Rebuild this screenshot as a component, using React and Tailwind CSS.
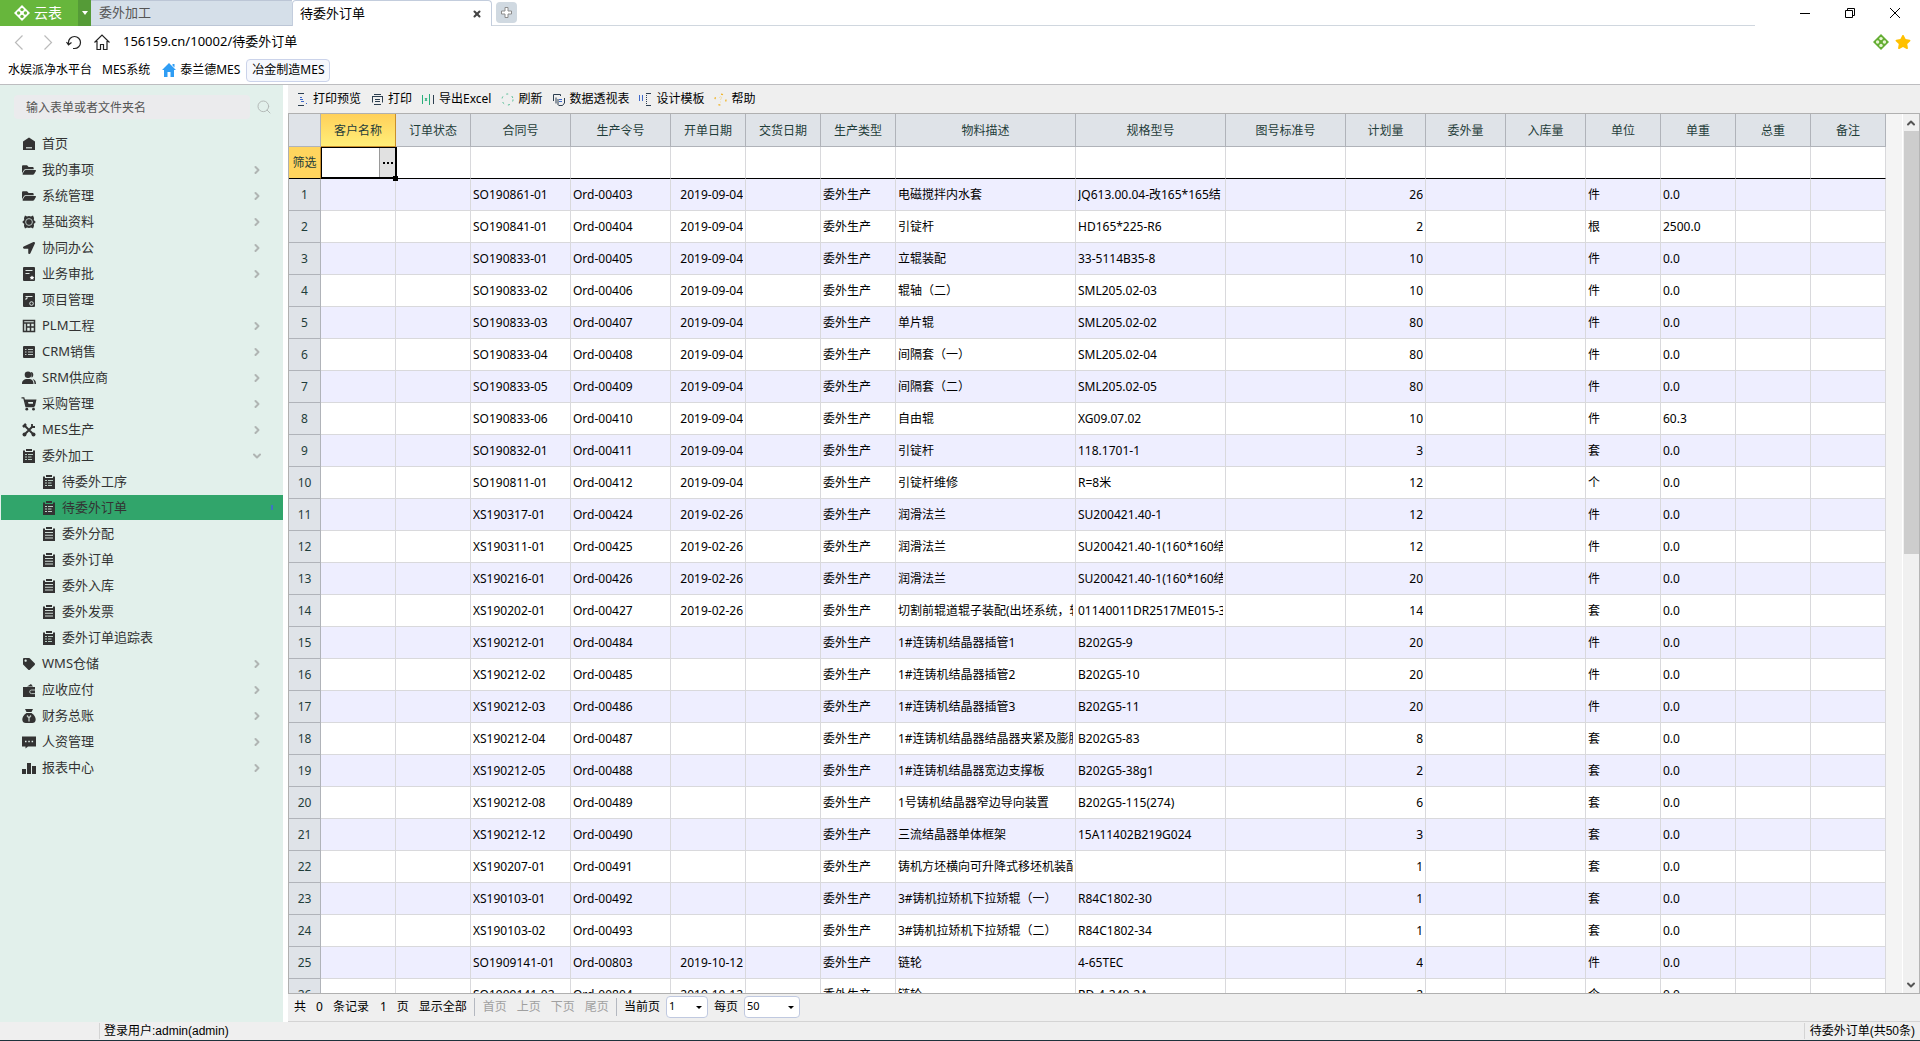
import React from 'react';
import { FaFolderOpen, FaLocationArrow, FaStar, FaTag } from 'react-icons/fa';
import { ChevronDown, ChevronRight, ChevronUp, Search, X } from 'lucide-react';

const ICONS = {
  home: (
    <>
      <path d="M7 0.5 13 4.5V13H1V4.5Z" fill="#333" />
      <rect x="4" y="10" width="6" height="1.5" fill="#b9c4c0" />
    </>
  ),
  gear: (
    <>
      <path d="M3 .5 5 1.5 7 1 9 1.5 11 .5 12 3 11.8 5 13.8 7 11.8 9 12 11 11 13.5 9 12.5 7 13 5 12.5 3 13.5 2 11 2.2 9 .2 7 2.2 5 2 3Z" fill="#333" />
      <circle cx="7" cy="7" r="3.4" fill="none" stroke="#b9c4c0" strokeWidth="1" />
    </>
  ),
  doc: (
    <>
      <rect x="1" y="0" width="12" height="14" rx="1" fill="#333" />
      <path d="M3.5 3.5h7M3.5 6.5h4" stroke="#dfe9e5" strokeWidth="1.2" />
      <path d="m10 8.5.8 1.3 1.5.3-1 1.1.1 1.5-1.4-.6-1.4.6.1-1.5-1-1.1 1.5-.3Z" fill="#fff" />
    </>
  ),
  project: (
    <>
      <rect x="1" y="0" width="12" height="14" rx="1" fill="#333" />
      <path d="M3.5 3.5h7M3.5 6.5l2-2" stroke="#dfe9e5" strokeWidth="1.2" />
      <circle cx="9.5" cy="10.5" r="1.8" fill="#333" stroke="#dfe9e5" strokeWidth="1" />
    </>
  ),
  grid: (
    <path d="M1.5 1.5h11v11h-11zM1.5 4h11M4.5 4v8.5M8.5 4v8.5M4.5 8h8" fill="none" stroke="#333" strokeWidth="1.5" />
  ),
  list: (
    <>
      <rect x="1" y="1" width="12" height="12" rx="1" fill="#333" />
      <path d="M3 4.5h1.5M6 4.5h5M3 7h1.5M6 7h5M3 9.5h1.5M6 9.5h5" stroke="#c2ccc8" strokeWidth="1" />
    </>
  ),
  users: (
    <>
      <circle cx="6" cy="3.8" r="3.3" fill="#333" />
      <path d="M9 1c3 .2 3 5 .5 5.500zM0 13c0-3.500 2-4.500 4-5h4c2 .5 3.500 1.500 3.500 5zM10.500 8c2 .5 3.500 1.500 3.500 5h-1.500c0-2-.7-3.700-2-5Z" fill="#333" />
    </>
  ),
  cart: (
    <>
      <path d="M-.5.8h2.300L4 9.500h8.500" fill="none" stroke="#333" strokeWidth="1.300" />
      <path d="M2.500 2.500H14.500L13 9H4Z" fill="#333" />
      <path d="M6 5h5v1.800H6.500z" fill="#e2f0eb" />
      <circle cx="4.800" cy="12.200" r="1.400" fill="#333" />
      <circle cx="11.500" cy="12.200" r="1.400" fill="#333" />
    </>
  ),
  tools: (
    <>
      <path d="M3 3 11 11M11 3 3 11" stroke="#333" strokeWidth="2" />
      <path d="M1 4 4 1" stroke="#333" strokeWidth="2.500" />
      <path d="M10 1v3h3" fill="none" stroke="#333" strokeWidth="1.800" />
      <circle cx="11.500" cy="11.500" r="2" fill="#333" />
      <circle cx="2.500" cy="11.500" r="2" fill="#333" />
    </>
  ),
  clipboard: (
    <>
      <path d="M1 1.500H3V3H11V1.500H13V14H1ZM4 0H10V2H4Z" fill="#333" />
      <path d="M3 5.500h8M3 8.300h8M3 11h8" stroke="#cfdcd6" strokeWidth="1.100" />
    </>
  ),
  order: (
    <>
      <path d="M1 1.500H3V3H11V1.500H13V14H1ZM4 0H10V2H4Z" fill="#333" />
      <path d="M3 5.500h2M6 5.500h5M3 8h2M6 8h3.500M3 10.500h2M6 10.500h4" stroke="#b8cfc4" strokeWidth="1" />
    </>
  ),
  wallet: (
    <>
      <path d="M1 4H13V14H1ZM5 3.500 9 1 11 3.500Z" fill="#333" />
      <path d="M13 7H9.500a1.800 1.800 0 0 0 0 3.600H13" fill="none" stroke="#b9c4c0" strokeWidth="1" />
    </>
  ),
  money: (
    <>
      <path d="M3 0H11L9.500 3H4.500ZM4.500 4h5c3 2 4.200 4.500 4.200 6.500 0 2.500-1.500 3.500-3.500 3.500H3.800C1.800 14 .3 13 .3 10.500.3 8.500 1.500 6 4.500 4Z" fill="#333" />
      <path d="m5 6.500 2 2.500 2-2.500M7 9v3.500" fill="none" stroke="#c2ccc8" strokeWidth="1.300" />
    </>
  ),
  chat: (
    <>
      <path d="M0 1.500H14V11.500H6L3.500 13.500V11.500H0Z" fill="#333" />
      <path d="M3 6.500h1.500M6.300 6.500h1.500M9.600 6.500h1.500" stroke="#e2f0eb" strokeWidth="1.500" />
    </>
  ),
  chart: <path d="M0 8h4v5H0zM5 2h4v11H5zM10 5h4v8h-4z" fill="#333" />,
};

function MenuIcon({ name }) {
  if (name === 'folder') return <FaFolderOpen className="h-[14px] w-[14px] shrink-0" />;
  if (name === 'send') return <FaLocationArrow className="h-[12px] w-[14px] shrink-0" />;
  if (name === 'tag') return <FaTag className="h-[12px] w-[14px] shrink-0" />;
  return (
    <svg viewBox="0 0 14 14" className="h-[14px] w-[14px] shrink-0 overflow-visible" aria-hidden="true">
      {ICONS[name]}
    </svg>
  );
}

const MENU = [
  { label: '首页', icon: 'home' },
  { label: '我的事项', icon: 'folder', more: true },
  { label: '系统管理', icon: 'folder', more: true },
  { label: '基础资料', icon: 'gear', more: true },
  { label: '协同办公', icon: 'send', more: true },
  { label: '业务审批', icon: 'doc', more: true },
  { label: '项目管理', icon: 'project' },
  { label: 'PLM工程', icon: 'grid', more: true },
  { label: 'CRM销售', icon: 'list', more: true },
  { label: 'SRM供应商', icon: 'users', more: true },
  { label: '采购管理', icon: 'cart', more: true },
  { label: 'MES生产', icon: 'tools', more: true },
  {
    label: '委外加工',
    icon: 'order',
    children: [
      { label: '待委外工序', icon: 'order' },
      { label: '待委外订单', icon: 'order', active: true },
      { label: '委外分配', icon: 'clipboard' },
      { label: '委外订单', icon: 'clipboard' },
      { label: '委外入库', icon: 'clipboard' },
      { label: '委外发票', icon: 'clipboard' },
      { label: '委外订单追踪表', icon: 'order' },
    ],
  },
  { label: 'WMS仓储', icon: 'tag', more: true },
  { label: '应收应付', icon: 'wallet', more: true },
  { label: '财务总账', icon: 'money', more: true },
  { label: '人资管理', icon: 'chat', more: true },
  { label: '报表中心', icon: 'chart', more: true },
];

const COLUMNS = [
  { label: '客户名称', width: 'w-[75px]' },
  { label: '订单状态', width: 'w-[75px]' },
  { label: '合同号', width: 'w-[100px]' },
  { label: '生产令号', width: 'w-[100px]' },
  { label: '开单日期', width: 'w-[75px]', align: 'text-right' },
  { label: '交货日期', width: 'w-[75px]' },
  { label: '生产类型', width: 'w-[75px]' },
  { label: '物料描述', width: 'w-[180px]' },
  { label: '规格型号', width: 'w-[150px]' },
  { label: '图号标准号', width: 'w-[120px]' },
  { label: '计划量', width: 'w-[80px]', align: 'text-right' },
  { label: '委外量', width: 'w-[80px]' },
  { label: '入库量', width: 'w-[80px]' },
  { label: '单位', width: 'w-[75px]' },
  { label: '单重', width: 'w-[75px]' },
  { label: '总重', width: 'w-[75px]' },
  { label: '备注', width: 'w-[75px]' },
];

// contract, order, date, description, spec, quantity, unit, weight
const ORDERS = [
  ['SO190861-01', 'Ord-00403', '2019-09-04', '电磁搅拌内水套', 'JQ613.00.04-改165*165结', '26', '件', '0.0'],
  ['SO190841-01', 'Ord-00404', '2019-09-04', '引锭杆', 'HD165*225-R6', '2', '根', '2500.0'],
  ['SO190833-01', 'Ord-00405', '2019-09-04', '立辊装配', '33-5114B35-8', '10', '件', '0.0'],
  ['SO190833-02', 'Ord-00406', '2019-09-04', '辊轴（二）', 'SML205.02-03', '10', '件', '0.0'],
  ['SO190833-03', 'Ord-00407', '2019-09-04', '单片辊', 'SML205.02-02', '80', '件', '0.0'],
  ['SO190833-04', 'Ord-00408', '2019-09-04', '间隔套（一）', 'SML205.02-04', '80', '件', '0.0'],
  ['SO190833-05', 'Ord-00409', '2019-09-04', '间隔套（二）', 'SML205.02-05', '80', '件', '0.0'],
  ['SO190833-06', 'Ord-00410', '2019-09-04', '自由辊', 'XG09.07.02', '10', '件', '60.3'],
  ['SO190832-01', 'Ord-00411', '2019-09-04', '引锭杆', '118.1701-1', '3', '套', '0.0'],
  ['SO190811-01', 'Ord-00412', '2019-09-04', '引锭杆维修', 'R=8米', '12', '个', '0.0'],
  ['XS190317-01', 'Ord-00424', '2019-02-26', '润滑法兰', 'SU200421.40-1', '12', '件', '0.0'],
  ['XS190311-01', 'Ord-00425', '2019-02-26', '润滑法兰', 'SU200421.40-1(160*160结', '12', '件', '0.0'],
  ['XS190216-01', 'Ord-00426', '2019-02-26', '润滑法兰', 'SU200421.40-1(160*160结', '20', '件', '0.0'],
  ['XS190202-01', 'Ord-00427', '2019-02-26', '切割前辊道辊子装配(出坯系统，轻', '01140011DR2517ME015-3', '14', '套', '0.0'],
  ['XS190212-01', 'Ord-00484', '', '1#连铸机结晶器插管1', 'B202G5-9', '20', '件', '0.0'],
  ['XS190212-02', 'Ord-00485', '', '1#连铸机结晶器插管2', 'B202G5-10', '20', '件', '0.0'],
  ['XS190212-03', 'Ord-00486', '', '1#连铸机结晶器插管3', 'B202G5-11', '20', '件', '0.0'],
  ['XS190212-04', 'Ord-00487', '', '1#连铸机结晶器结晶器夹紧及膨胀', 'B202G5-83', '8', '套', '0.0'],
  ['XS190212-05', 'Ord-00488', '', '1#连铸机结晶器宽边支撑板', 'B202G5-38g1', '2', '套', '0.0'],
  ['XS190212-08', 'Ord-00489', '', '1号铸机结晶器窄边导向装置', 'B202G5-115(274)', '6', '套', '0.0'],
  ['XS190212-12', 'Ord-00490', '', '三流结晶器单体框架', '15A11402B219G024', '3', '套', '0.0'],
  ['XS190207-01', 'Ord-00491', '', '铸机方坯横向可升降式移坯机装配', '', '1', '套', '0.0'],
  ['XS190103-01', 'Ord-00492', '', '3#铸机拉矫机下拉矫辊（一）', 'R84C1802-30', '1', '套', '0.0'],
  ['XS190103-02', 'Ord-00493', '', '3#铸机拉矫机下拉矫辊（二）', 'R84C1802-34', '1', '套', '0.0'],
  ['SO1909141-01', 'Ord-00803', '2019-10-12', '链轮', '4-65TEC', '4', '件', '0.0'],
  ['SO1909141-02', 'Ord-00804', '2019-10-12', '链轮', 'RD-4-240-2A', '2', '个', '0.0'],
];

const toCells = ([contract, order, date, desc, spec, qty, unit, weight]) => [
  '', '', contract, order, date, '', '委外生产', desc, spec, '', qty, '', '', unit, weight, '', '',
];

function Logo({ className, color, bg }) {
  return (
    <svg viewBox="0 0 16 16" className={className} aria-hidden="true">
      <path d="M8 0 16 8 8 16 0 8Z" fill={color} />
      <g fill={bg}>
        <circle cx="8" cy="4.600" r="1.700" />
        <circle cx="8" cy="11.400" r="1.700" />
        <circle cx="4.600" cy="8" r="1.700" />
        <circle cx="11.400" cy="8" r="1.700" />
      </g>
    </svg>
  );
}

function TabStrip() {
  return (
    <div className="flex h-[26px] shrink-0">
      <button className="flex w-[78px] items-center gap-1 bg-[#67b63c] pl-[14px] text-sm text-white">
        <Logo className="h-4 w-4" color="#fff" bg="#67b63c" />
        云表
      </button>
      <button className="flex w-[13px] items-center justify-center bg-[#559b37]" aria-label="菜单">
        <svg viewBox="0 0 6 4" className="h-1 w-[6px]"><path d="M0 0h6L3 4Z" fill="#fff" /></svg>
      </button>
      <button className="w-[201px] border-t border-b border-[#bcc6d6] bg-[#d5dfe9] pl-2 text-left text-[13px] text-[#555]">
        委外加工
      </button>
      <div className="flex w-[200px] items-center justify-between rounded-t-sm border-t border-r border-l border-[#c3cddd] pr-[9px] pl-[7px] text-[13px]">
        <button>待委外订单</button>
        <button aria-label="关闭"><X className="h-[10px] w-[10px] text-[#444]" strokeWidth={5} /></button>
      </div>
      <div className="flex w-[1263px] shrink items-start border-b border-[#d0d7df] pt-[2px] pl-1">
        <button className="flex h-[21px] w-[21px] items-center justify-center rounded-sm bg-[#d0d9e1]" aria-label="新标签页">
          <svg viewBox="0 0 11 11" className="h-[11px] w-[11px]">
            <path d="M4 .5h3V4h3.500v3H7v3.500H4V7H.5V4H4Z" fill="#fff" stroke="#8c8c8c" />
          </svg>
        </button>
      </div>
      <div className="ml-auto flex items-center gap-[35px] pr-5">
        <button aria-label="最小化">
          <svg viewBox="0 0 10 10" className="h-[10px] w-[10px]"><path d="M0 5.500h10" stroke="#000" /></svg>
        </button>
        <button aria-label="还原">
          <svg viewBox="0 0 10 10" className="h-[10px] w-[10px]">
            <path d="M.5 2.500h7v7h-7zM2.500 2.500v-2h7v7h-2" fill="none" stroke="#000" />
          </svg>
        </button>
        <button aria-label="关闭窗口">
          <svg viewBox="0 0 10 10" className="h-[10px] w-[10px]"><path d="M0 0 10 10M10 0 0 10" stroke="#000" /></svg>
        </button>
      </div>
    </div>
  );
}

function AddressBar() {
  return (
    <div className="flex h-8 shrink-0 items-center pr-[9px] pl-[14px]">
      <button aria-label="后退">
        <svg viewBox="0 0 9 15" className="h-[15px] w-[9px]"><path d="M8.500.5 1.500 7.500l7 7" fill="none" stroke="#bbb" strokeWidth="1.200" /></svg>
      </button>
      <button className="ml-[21px]" aria-label="前进">
        <svg viewBox="0 0 9 15" className="h-[15px] w-[9px]"><path d="m.5.5 7 7-7 7" fill="none" stroke="#bbb" strokeWidth="1.200" /></svg>
      </button>
      <button className="ml-[13px]" aria-label="刷新页面">
        <svg viewBox="0 0 16 16" className="h-4 w-4">
          <path d="M2.500 10.500V8.500a6 6 0 1 1 6 6H7M.5 8l2 2.800L5.500 8.500" fill="none" stroke="#222" strokeWidth="1.200" />
        </svg>
      </button>
      <button className="ml-3" aria-label="主页">
        <svg viewBox="0 0 16 16" className="h-4 w-4">
          <path d="M.5 8.500 8 1l7.500 7.500M3 7v8.500h3.500v-5h3v5H13V7" fill="none" stroke="#222" strokeWidth="1.200" />
        </svg>
      </button>
      <input
        aria-label="地址"
        defaultValue="156159.cn/10002/待委外订单"
        className="ml-[13px] min-w-0 flex-1 text-[13px] text-black outline-none"
      />
      <Logo className="h-4 w-4" color="#63ad32" bg="#e9f6d5" />
      <FaStar className="ml-[6px] h-4 w-4 text-[#ffc000]" />
    </div>
  );
}

function Bookmarks() {
  return (
    <nav className="flex h-[27px] shrink-0 items-start border-b border-[#bdbdc0] pl-2 text-xs text-black">
      <div className="flex h-6 items-center">
        <a href="#water">水娱派净水平台</a>
        <a href="#mes" className="ml-[10px]">MES系统</a>
        <a href="#tailande" className="ml-3 flex items-center gap-1">
          <svg viewBox="0 0 14 14" className="h-[14px] w-[14px]">
            <path d="M7 0 14 7H12V14H8.500V9h-3v5H2V7H0ZM10.500 1h2v3.500l-2-2Z" fill="#2f9df4" />
          </svg>
          泰兰德MES
        </a>
        <a href="#metallurgy" className="ml-[6px] flex h-[23px] items-center rounded-sm border border-[#cbd3ea] bg-[#f6f8fd] px-[5px]">
          冶金制造MES
        </a>
      </div>
    </nav>
  );
}

function MenuRow({ item, nested }) {
  return (
    <a
      href="#menu"
      className={`mb-px ml-px flex h-[25px] items-center gap-[6px] ${nested ? 'pl-[41px]' : 'pl-[21px]'} ${
        item.active ? 'bg-[#31a56b]' : ''
      }`}
    >
      <MenuIcon name={item.icon} />
      <span>{item.label}</span>
      {item.active && <span className="mr-[10px] ml-auto h-[5px] w-[2px] bg-[#3c74c4]" />}
      {item.more && <ChevronRight className="mr-5 ml-auto h-3 w-3 text-[#b0b5b3]" strokeWidth={4} />}
      {item.children && <ChevronDown className="mr-5 ml-auto h-3 w-3 text-[#b0b5b3]" strokeWidth={4} />}
    </a>
  );
}

function Sidebar() {
  return (
    <aside className="w-[283px] shrink-0 bg-[#e2f0eb] text-[13px] text-[#333]">
      <div className="flex h-[46px] items-center pb-[2px] pl-[14px]">
        <input
          aria-label="搜索"
          placeholder="输入表单或者文件夹名"
          className="h-6 w-[236px] rounded-sm bg-[#ebebed] pl-3 text-xs outline-none placeholder:text-[#555]"
        />
        <button className="ml-[6px]" aria-label="查找"><Search className="h-4 w-4 text-[#b4bab8]" strokeWidth={1.5} /></button>
      </div>
      <nav>
        {MENU.map((item) => (
          <React.Fragment key={item.label}>
            <MenuRow item={item} />
            {item.children && item.children.map((child) => <MenuRow key={child.label} item={child} nested />)}
          </React.Fragment>
        ))}
      </nav>
    </aside>
  );
}

const TOOLS = [
  {
    label: '打印预览',
    icon: (
      <>
        <path d="M2 .5h6M2 12.500h6" stroke="#2c3e50" />
        <path d="M4 4.500h2M4 6.500h3M5 8.500h3M10 10.500h1" stroke="#3e68c9" />
      </>
    ),
  },
  {
    label: '打印',
    icon: <path d="M3 1.500h7M3 11.500h7M1.500 3.500v6M11.500 3.500v6M1 3.500h11M4 6.500h5M4 8.500h5" fill="none" stroke="#2c3e50" />,
  },
  {
    label: '导出Excel',
    icon: (
      <>
        <path d="M.5 2v9M7.500 1v11M3 5l2 3M5 5 3 8" stroke="#27ae7a" />
        <path d="M11.500 2v9" stroke="#2c3e50" />
      </>
    ),
  },
  {
    label: '刷新',
    icon: <circle cx="6.500" cy="6.500" r="5.500" fill="none" stroke="#27ae7a" strokeDasharray="2 4" strokeOpacity=".8" />,
  },
  {
    label: '数据透视表',
    icon: (
      <>
        <path d="M1.500 8V1.500h7V3M4 10.500V4.500M6.500 12.500h4L12.500 10V5M6 12V6" fill="none" stroke="#2c3e50" />
        <path d="M7 6.500h3M7 8.500h3" stroke="#3e68c9" />
      </>
    ),
  },
  {
    label: '设计模板',
    icon: (
      <>
        <path d="M.5 2v6M3.500 2v6" stroke="#3e68c9" />
        <path d="M7 .5h5M7 12.500h5" stroke="#2c3e50" />
        <path d="M7.500 2v9" stroke="#2c3e50" strokeDasharray="1 1" />
      </>
    ),
  },
  {
    label: '帮助',
    icon: (
      <>
        <circle cx="6.500" cy="6.500" r="5.500" fill="none" stroke="#f0b429" strokeDasharray="2 6.600" strokeWidth="1.300" />
        <path d="M5.500 5c0-2 2.500-1.500 2 0-.3.800-1 1-1 2M6.500 8.500v1" fill="none" stroke="#f5dfa8" />
      </>
    ),
  },
];

function Toolbar() {
  return (
    <div className="flex h-7 shrink-0 items-center gap-[10px] bg-[#efefef] pl-2 text-xs">
      {TOOLS.map((tool) => (
        <button key={tool.label} className="flex h-6 items-center gap-1 whitespace-nowrap">
          <svg viewBox="0 0 13 13" className="h-[13px] w-[13px]" aria-hidden="true">{tool.icon}</svg>
          {tool.label}
        </button>
      ))}
    </div>
  );
}

function FilterCell() {
  return (
    <td className="relative p-0">
      <div className="-mr-px flex h-8 border-t border-r-2 border-b-2 border-l border-black bg-white">
        <input aria-label="筛选客户名称" className="min-w-0 flex-1 outline-none" />
        <button className="w-4 border-l border-[#999] bg-[#e1e1e1]" aria-label="选择">
          <svg viewBox="0 0 10 2" className="mx-auto h-[2px] w-[10px]">
            <path d="M0 0h2v2H0zM4 0h2v2H4zM8 0h2v2H8z" />
          </svg>
        </button>
      </div>
      <span className="absolute -right-[2px] -bottom-[2px] h-[5px] w-[5px] bg-black" />
    </td>
  );
}

function OrderTable() {
  return (
    <table className="w-[1597px] shrink-0 table-fixed border-separate border-spacing-0 self-start text-xs">
      <colgroup>
        <col className="w-[32px]" />
        {COLUMNS.map((col) => <col key={col.label} className={col.width} />)}
      </colgroup>
      <thead>
        <tr className="h-[33px]">
          <th className="border-r border-b border-[#b0b3b9] bg-[#dfe3e8] p-0" />
          {COLUMNS.map((col, i) => (
            <th
              key={col.label}
              className={`border-r border-b px-0 pt-[2px] pb-0 font-normal text-[#1f3d3a] ${
                i === 0 ? 'border-[#c98f2b] bg-linear-to-b from-[#ffd05a] to-[#ffee78]' : 'border-[#b0b3b9] bg-[#dfe3e8]'
              }`}
            >
              {col.label}
            </th>
          ))}
        </tr>
      </thead>
      <tbody>
        <tr className="h-8">
          <th className="border-r border-b border-r-[#c98f2b] border-b-black bg-[#ffd55e] p-0 font-normal text-[#1f3d3a]">筛选</th>
          <FilterCell />
          {COLUMNS.slice(1).map((col) => (
            <td key={col.label} className="border-r border-b border-r-[#d9d9dc] border-b-black bg-white" />
          ))}
        </tr>
        {ORDERS.map((order, i) => (
          <tr key={order[1]} className={`h-8 ${i % 2 === 0 ? 'bg-[#eeeeff]' : 'bg-white'}`}>
            <th className="border-r border-b border-[#b0b3b9] bg-[#dfe3e8] p-0 font-normal text-[#1f3d3a]">{i + 1}</th>
            {toCells(order).map((cell, j) => (
              <td key={COLUMNS[j].label} className="border-r border-b border-[#d9d9dc] px-[2px] py-0 text-black">
                <div className={`overflow-hidden whitespace-nowrap ${COLUMNS[j].align || ''}`}>{cell}</div>
              </td>
            ))}
          </tr>
        ))}
      </tbody>
    </table>
  );
}

function ScrollBar() {
  return (
    <div className="ml-auto flex w-[18px] shrink-0 flex-col items-center border-r border-l border-r-[#b5b5b5] border-l-white bg-[#f0f0f0]">
      <button className="flex h-[17px] items-center" aria-label="向上滚动">
        <ChevronUp className="h-3 w-3 text-[#555]" strokeWidth={4} />
      </button>
      <div className="h-[423px] w-[15px] bg-[#cdcdcd]" />
      <button className="mt-auto flex h-[17px] items-center" aria-label="向下滚动">
        <ChevronDown className="h-3 w-3 text-[#555]" strokeWidth={4} />
      </button>
    </div>
  );
}

function PageSelect({ id, value, width }) {
  return (
    <span className="relative flex">
      <select
        id={id}
        defaultValue={value}
        className={`h-[22px] appearance-none rounded-sm border border-[#c0c9e0] bg-white pl-[2px] text-[11px] outline-none ${width}`}
      >
        <option>{value}</option>
      </select>
      <svg viewBox="0 0 6 3" className="pointer-events-none absolute top-[10px] right-[6px] h-[3px] w-[6px]"><path d="M0 0h6L3 3Z" /></svg>
    </span>
  );
}

function Pager() {
  return (
    <footer className="flex h-7 shrink-0 items-center border-b border-[#d4d4d4] bg-[#efefef] pb-[2px] pl-[6px] text-xs text-black">
      <span>共</span>
      <span className="ml-[10px]">0</span>
      <span className="ml-[10px]">条记录</span>
      <span className="ml-[11px]">1</span>
      <span className="ml-[10px]">页</span>
      <button className="ml-[10px]">显示全部</button>
      <span className="ml-[7px] h-[18px] w-px bg-[#b4b8c0]" />
      <div className="ml-2 flex gap-[10px] text-[#a0a0a0]">
        <button disabled>首页</button>
        <button disabled>上页</button>
        <button disabled>下页</button>
        <button disabled>尾页</button>
      </div>
      <span className="mr-[7px] ml-[7px] h-[18px] w-px bg-[#b4b8c0]" />
      <label htmlFor="page" className="mr-[6px]">当前页</label>
      <PageSelect id="page" value="1" width="w-[42px]" />
      <label htmlFor="size" className="mx-[6px]">每页</label>
      <PageSelect id="size" value="50" width="w-[56px]" />
    </footer>
  );
}

function App() {
  return (
    <div className="flex h-screen flex-col overflow-hidden bg-white font-['Noto_Sans','Noto_Sans_CJK_SC',sans-serif]">
      <TabStrip />
      <AddressBar />
      <Bookmarks />
      <div className="flex min-h-0 flex-1 gap-[5px]">
        <Sidebar />
        <main className="flex min-w-0 flex-1 flex-col">
          <Toolbar />
          <div className="flex min-h-0 flex-1 overflow-hidden border-t border-b border-l border-[#b0b0b0] bg-[#f4f4f4]">
            <OrderTable />
            <ScrollBar />
          </div>
          <Pager />
        </main>
      </div>
      {/* Status bar */}
      <div className="flex h-[19px] shrink-0 items-center border-b border-[#1e323c] bg-[#efefef] font-['Liberation_Sans','Noto_Sans_CJK_SC',sans-serif] text-xs text-black">
        <span className="ml-[99px] border-l border-[#d4d4d4] pl-1 leading-4">登录用户:admin(admin)</span>
        <span className="mr-[5px] ml-auto border-l border-[#d4d4d4] pl-[5px] leading-4">待委外订单(共50条)</span>
      </div>
    </div>
  );
}

export default App;
